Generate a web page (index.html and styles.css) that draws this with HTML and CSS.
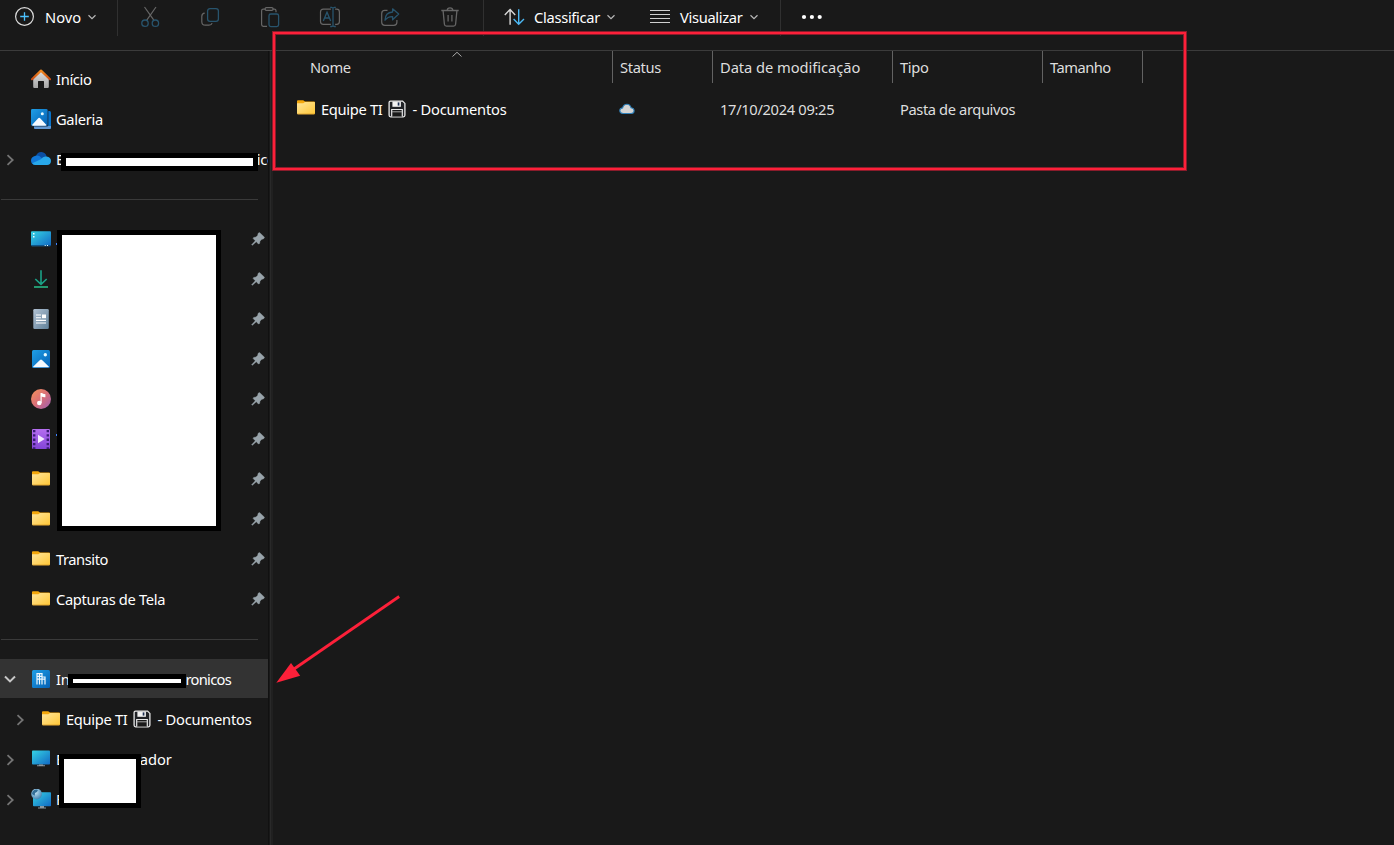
FILE: index.html
```html
<!DOCTYPE html>
<html lang="pt-BR">
<head>
<meta charset="utf-8">
<title>Explorador de Arquivos</title>
<link rel="stylesheet" href="styles.css">
</head>
<body>
<svg class="defs" aria-hidden="true">
  <defs>
    <linearGradient id="gFolder" x1="0" y1="0" x2="1" y2="1"><stop offset="0" stop-color="#ffe69c"/><stop offset="1" stop-color="#ffc736"/></linearGradient>
    <linearGradient id="gBlue" x1="0" y1="0" x2="1" y2="1"><stop offset="0" stop-color="#1f9fe6"/><stop offset="1" stop-color="#0560b4"/></linearGradient>
    <linearGradient id="gCyan" x1="0" y1="0" x2="1" y2="1"><stop offset="0" stop-color="#35d3e4"/><stop offset="1" stop-color="#1269c4"/></linearGradient>
    <linearGradient id="gDoc" x1="0" y1="0" x2="1" y2="1"><stop offset="0" stop-color="#b2c2d3"/><stop offset="1" stop-color="#60819a"/></linearGradient>
    <linearGradient id="gMusic" x1="0" y1="0" x2="1" y2="1"><stop offset="0" stop-color="#f5935a"/><stop offset=".5" stop-color="#d96f78"/><stop offset="1" stop-color="#9c5fb5"/></linearGradient>
    <linearGradient id="gVideo" x1="0" y1="0" x2="0" y2="1"><stop offset="0" stop-color="#b56ef0"/><stop offset="1" stop-color="#8244d8"/></linearGradient>
    <linearGradient id="gHouse" x1="0" y1="0" x2="0" y2="1"><stop offset="0" stop-color="#dedede"/><stop offset="1" stop-color="#a6a6a6"/></linearGradient>
    <linearGradient id="gRoof" x1="0" y1="0" x2="0" y2="1"><stop offset="0" stop-color="#f38a1d"/><stop offset="1" stop-color="#c94b12"/></linearGradient>
    <radialGradient id="gGlobe" cx=".4" cy=".35" r=".7"><stop offset="0" stop-color="#c5e4f5"/><stop offset="1" stop-color="#3c80b0"/></radialGradient>
  </defs>
  <symbol id="folder" viewBox="0 0 20 20">
    <path d="M1 3.1Q1 2.2 2 2.2H7.2L9 3.4H18Q19 3.4 19 4.4V9H1Z" fill="#f5a80b"/>
    <path d="M1 5.2H7.3L9 4H18.2Q19 4 19 4.8V15.3Q19 16.3 18 16.3H2Q1 16.3 1 15.3Z" fill="url(#gFolder)"/>
    <path d="M1.5 16H18.5" stroke="#d99a25" stroke-width=".7"/>
  </symbol>
  <symbol id="pin" viewBox="0 0 14 14">
    <path d="M8.5.5 13.5 5.2 12.7 6.7 10.6 7.5 9 9.2 8.6 11.5 7.4 12 5.3 9.7 1.4 13.3.6 12.7 4.3 8.8 2.1 6.5 2.6 5.5 5 5 6.6 3.4 7.2 1.2Z" fill="#98a3aa" stroke="#98a3aa" stroke-width=".4"/>
  </symbol>
  <symbol id="right" viewBox="0 0 10 12"><path d="M2.5 1.2 7.7 6 2.5 10.8" fill="none" stroke="#747474" stroke-width="1.8"/></symbol>
  <symbol id="down" viewBox="0 0 10 8"><path d="M1.5 2.3 5 5.6 8.5 2.3" fill="none" stroke="#b8b8b8" stroke-width="1.2"/></symbol>
  <symbol id="floppy" viewBox="0 0 18 18">
    <path d="M2.5 1.1H14.6L16.9 3.4V15.3Q16.9 16.8 15.4 16.8H2.6Q1.1 16.8 1.1 15.3V2.6Q1.1 1.1 2.5 1.1Z" fill="#202226" stroke="#e8e8e8" stroke-width="1.3"/>
    <path d="M4.4 1.5H12.9V6.8H4.4Z" fill="#f2f2f2"/><path d="M9.7 2.4H11.4V5.6H9.7Z" fill="#1b2d50"/>
    <path d="M3.7 16.5V9.5H14.3V16.5" fill="#191919" stroke="#e8e8e8" stroke-width="1.2"/><path d="M4 11.8H14" stroke="#b5b5b5" stroke-width=".9"/>
  </symbol>
</svg>

<div class="window">
  <header class="toolbar">
    <div class="command new">
      <svg width="20" height="20" viewBox="0 0 20 20" fill="none"><circle cx="9.5" cy="9.5" r="8.9" stroke="#dcdcdc" stroke-width="1.2"/><path d="M9.5 5.2V13.8M5.2 9.5H13.8" stroke="#4cc2ff" stroke-width="1.3"/></svg>
      <span class="label t-new">Novo</span>
      <svg class="caret" width="10" height="8"><use href="#down"/></svg>
    </div>
    <div class="rule"></div>
    <div class="actions">
      <svg viewBox="0 0 24 24" fill="none"><path d="M6.5 2 16 15.4M18 2 8.6 15.4" stroke="#666" stroke-width="1.2"/><circle cx="7" cy="18.2" r="3.2" stroke="#28546d" stroke-width="1.3"/><circle cx="17.4" cy="18.2" r="3.2" stroke="#28546d" stroke-width="1.3"/></svg>
      <svg viewBox="0 0 24 24" fill="none"><path d="M6.7 8.2Q3.8 8.5 3.8 11.4V16.7Q3.8 20.2 7.3 20.2H11Q13.6 20.2 14.1 18.2" stroke="#666" stroke-width="1.2"/><rect x="9.6" y="3.6" width="10.8" height="12.8" rx="2.4" stroke="#28546d" stroke-width="1.3"/></svg>
      <svg viewBox="0 0 24 24" fill="none"><path d="M8 4.2H5.2Q3.6 4.2 3.6 5.8V19.6Q3.6 21.3 5.2 21.3H9M14.3 4.2H16.3Q18 4.2 18 5.8V7.2" stroke="#666" stroke-width="1.2"/><rect x="7" y="2.6" width="8.2" height="2.8" rx="1.4" stroke="#666" stroke-width="1.1"/><rect x="11" y="9" width="9.6" height="12.6" rx="1.8" stroke="#28546d" stroke-width="1.3"/></svg>
      <svg viewBox="0 0 24 24" fill="none"><path d="M12.9 4.2H5.3Q2.5 4.2 2.5 7V16.5Q2.5 19.3 5.3 19.3H12.9M17.1 4.2H18.7Q21.4 4.2 21.4 7V16.5Q21.4 19.3 18.7 19.3H17.1" stroke="#666" stroke-width="1.2"/><path d="M5.3 16 9 7.2 12.7 16M6.5 13H11.5M12.2 2.3H13.6L15 3 16.4 2.3H17.8M12.2 21.5H13.6L15 20.8 16.4 21.5H17.8M15 3V21" stroke="#28546d" stroke-width="1.3"/></svg>
      <svg viewBox="0 0 24 24" fill="none"><path d="M9.5 5.4H6.8Q3.7 5.4 3.7 8.4V17.3Q3.7 20.3 6.8 20.3H15.8Q18.9 20.3 18.9 17.3V15" stroke="#666" stroke-width="1.2"/><path d="M14.6 3.8 20.7 9.1 14.6 14.7V11.6Q9.8 11.4 7 15.2Q7.2 7.5 14.6 7Z" stroke="#28546d" stroke-width="1.3" stroke-linejoin="round"/></svg>
      <svg viewBox="0 0 24 24" fill="none"><path d="M3.3 5.5H20.7M9.2 5.2Q9.3 2.8 12 2.8T14.8 5.2M5.1 5.8 6.4 19.3Q6.6 21.2 8.5 21.2H15.5Q17.4 21.2 17.6 19.3L18.9 5.8M10.1 10V16.5M13.9 10V16.5" stroke="#666" stroke-width="1.3"/></svg>
    </div>
    <div class="rule"></div>
    <div class="command sort">
      <svg width="22" height="20" viewBox="0 0 22 20" fill="none" stroke-width="1.4"><path d="M6.1 17.7V2.6M.8 8 6.1 2.5 11.2 8" stroke="#d8d8d8"/><path d="M14.7 2.2V17M9.6 12 14.7 17.2 20 12" stroke="#4cb8f4"/></svg>
      <span class="label t-sort">Classificar</span>
      <svg class="caret" width="10" height="8"><use href="#down"/></svg>
    </div>
    <div class="command view">
      <svg width="20" height="16" viewBox="0 0 20 16"><path d="M0 1.5H20M0 5.5H20M0 9.5H20M0 13.5H20" stroke="#d0d0d0" stroke-width="1.2"/></svg>
      <span class="label t-view">Visualizar</span>
      <svg class="caret" width="10" height="8"><use href="#down"/></svg>
    </div>
    <div class="rule"></div>
    <div class="command more"><svg width="22" height="6" viewBox="0 0 22 6" fill="#fff"><circle cx="3" cy="3" r="2.1"/><circle cx="10.9" cy="3" r="2.1"/><circle cx="18.7" cy="3" r="2.1"/></svg></div>
  </header>

  <div class="body">
    <nav class="sidebar">
      <div class="item"><svg class="icon" viewBox="0 0 20 20"><path d="M2.2 9 10 2.2 17.8 9V17.8Q17.8 19 16.7 19H13V12.6Q13 12 12.4 12H7.6Q7 12 7 12.6V19H3.3Q2.2 19 2.2 17.8Z" fill="url(#gHouse)"/><path d="M1 10.2 10 1.6 19 10.2" fill="none" stroke="url(#gRoof)" stroke-width="2.2" stroke-linecap="round" stroke-linejoin="round"/></svg><span class="label t-home">Início</span></div>
      <div class="item"><svg class="icon" viewBox="0 0 20 20"><path d="M4 2H18.5Q20 2 20 3.5V18.5Q20 20 18.5 20H4.5Q3 20 3 18.5Z" fill="#0872c8"/><path d="M3 17H20V18.5Q20 20 18.5 20H4.5Q3 20 3 18.5Z" fill="#6398d2"/><rect width="17.4" height="17.6" rx="1.7" fill="#16314d"/><rect width="16.5" height="16.7" rx="1.4" fill="url(#gBlue)"/><path d="M1 16 7 9.5Q8.2 8.2 9.4 9.5L15.5 16Q15.3 16.7 14.5 16.7H2Q1.2 16.7 1 16Z" fill="#f4f9ff"/><circle cx="11.3" cy="4.8" r="1.5" fill="#e8fbff"/></svg><span class="label t-gallery">Galeria</span></div>
      <div class="item"><svg class="chevron"><use href="#right"/></svg><svg class="icon" viewBox="0 0 20 20"><path d="M5 7Q6.4 2.8 10.6 3Q14.4 3.3 15.7 7.4L12 11 4 9Z" fill="#0b4fa3"/><path d="M4.6 6.8Q7.8 5.9 10.2 8.5L13.8 12.5 4 16Q0 15.5 0 11.6 0 7.7 4.6 6.8Z" fill="#1177d7"/><path d="M9.8 10.2Q12.5 6.7 15.5 7.6 20 8.3 20 12 19.8 15.9 16 16H4.4Q2.1 15.8 1.3 14.2Z" fill="#28a8ea"/></svg><span class="label">E</span><span class="label tail">ico</span><i class="redact account"></i></div>
      <div class="divider"></div>

      <div class="item"><svg class="icon" viewBox="0 0 20 20"><rect y="2.2" width="20" height="15" rx="1" fill="url(#gCyan)"/><path d="M0 16.2H20V17H0Z" fill="#0c4778"/><path d="M2 4h1.5v1.5H2zM2 7h1.5v1.5H2zM13.7 16h1v1h-1zM16 16h1v1h-1z" fill="#e8ffff"/></svg><i class="peek low"></i><svg class="pin"><use href="#pin"/></svg></div>
      <div class="item"><svg class="icon" viewBox="0 0 20 20" fill="none" stroke="#23976f" stroke-width="1.6"><path d="M10 1.3V15M4.3 10 10 15.4 15.7 10" stroke="#1ba287"/><path d="M3 18H17" stroke-width="2"/></svg><svg class="pin"><use href="#pin"/></svg></div>
      <div class="item"><svg class="icon" viewBox="0 0 20 20"><rect x="2.3" width="15.5" height="20" rx="1.3" fill="url(#gDoc)"/><path d="M5 6H10M5 8.7H10M5 11.4H15M5 14H15" stroke="#fff" stroke-width="1.1"/><path d="M11 5.5H15V9.2H11Z" fill="#fff"/></svg><svg class="pin"><use href="#pin"/></svg></div>
      <div class="item"><svg class="icon" viewBox="0 0 20 20"><rect x="1" y="1" width="18" height="18" rx="1.5" fill="url(#gBlue)"/><path d="M2 17.8 9 11Q10 10 11 11L18 17.8Q17.7 18.3 17 18.3H3Q2.3 18.3 2 17.8Z" fill="#f4f9ff"/><circle cx="14.3" cy="5.7" r="1.7" fill="#e8fbff"/></svg><svg class="pin"><use href="#pin"/></svg></div>
      <div class="item"><svg class="icon" viewBox="0 0 20 20"><circle cx="10" cy="10" r="10" fill="url(#gMusic)"/><circle cx="8.3" cy="14" r="2.3" fill="#fff"/><path d="M9.5 4H11Q11.5 5 14.4 5.2V8.2Q12 8.4 10.7 7.5V14H9.5Z" fill="#fff"/></svg><svg class="pin"><use href="#pin"/></svg></div>
      <div class="item"><svg class="icon" viewBox="0 0 20 20"><rect x="1" width="18" height="20" rx="1.3" fill="url(#gVideo)"/><path d="M3.2 1V20M16.8 1V20" stroke="#3b1b77" stroke-width="2.4" stroke-dasharray="2.3 2"/><path d="M7 5.8 13.7 10 7 14.2Z" fill="#f4eaff"/></svg><i class="peek high"></i><svg class="pin"><use href="#pin"/></svg></div>
      <div class="item"><svg class="icon"><use href="#folder"/></svg><svg class="pin"><use href="#pin"/></svg></div>
      <div class="item"><svg class="icon"><use href="#folder"/></svg><svg class="pin"><use href="#pin"/></svg></div>
      <div class="item"><svg class="icon"><use href="#folder"/></svg><span class="label t-transito">Transito</span><svg class="pin"><use href="#pin"/></svg></div>
      <div class="item"><svg class="icon"><use href="#folder"/></svg><span class="label t-capturas">Capturas de Tela</span><svg class="pin"><use href="#pin"/></svg></div>
      <div class="divider"></div>

      <div class="item selected"><svg class="chevron open" viewBox="0 0 12 10"><path d="M1 2.5 6 7.4 11 2.5" fill="none" stroke="#c8c8c8" stroke-width="2"/></svg><svg class="icon" viewBox="0 0 20 20"><rect x="1" y="1" width="18" height="18" rx="1.5" fill="url(#gBlue)"/><path d="M6 15.5V4.6H11V8H14V15.5M8.5 4.6V15.5M11 8V15.5M6 7.4H11M6 10.2H14" fill="none" stroke="#eef8ff" stroke-width="1.2"/></svg><span class="label">In</span><span class="label tail org">ronicos</span><i class="redact tenant"></i></div>
      <div class="item child"><svg class="chevron"><use href="#right"/></svg><svg class="icon"><use href="#folder"/></svg><span class="label t-team">Equipe TI</span><svg class="floppy"><use href="#floppy"/></svg><span class="label t-docs">- Documentos</span></div>
      <div class="item"><svg class="chevron"><use href="#right"/></svg><svg class="icon" viewBox="0 0 20 20"><rect x="1" y="1.5" width="18" height="14" rx=".8" fill="url(#gCyan)"/><path d="M8 15.5H12V16.2H14V17.2H6V16.2H8Z" fill="#8c979f"/></svg><span class="label">E</span><span class="label tail pc">ador</span></div>
      <div class="item"><svg class="chevron"><use href="#right"/></svg><svg class="icon" viewBox="0 0 20 20"><rect x="2" y="3.2" width="18" height="14" rx=".8" fill="url(#gCyan)"/><path d="M9 17H13V18.4H15V19.5H7V18.4H9Z" fill="#8c979f"/><circle cx="5.6" cy="5" r="5.4" fill="url(#gGlobe)"/><path d="M1.5 2.7Q4-.5 7 1 6.3 3.4 4 4L3.7 6.8 1 5Z" fill="#326d96"/></svg><span class="label">F</span></div>
      <i class="redact quick"></i>
      <i class="redact devices"></i>
    </nav>
    <div class="splitter"></div>
    <main class="files">
      <svg class="ascending" viewBox="0 0 12 7"><path d="M1.5 5.5 6 1.3 10.5 5.5" fill="none" stroke="#aaa"/></svg>
      <div class="columns head">
        <div class="name"><span class="label t-name">Nome</span></div>
        <div><span class="label t-status">Status</span></div>
        <div><span class="label t-date">Data de modificação</span></div>
        <div><span class="label t-type">Tipo</span></div>
        <div><span class="label t-size">Tamanho</span></div>
      </div>
      <div class="columns entry">
        <div class="name"><svg class="icon"><use href="#folder"/></svg><span class="label t-team">Equipe TI</span><svg class="floppy"><use href="#floppy"/></svg><span class="label t-docs">- Documentos</span></div>
        <div><svg class="cloud" viewBox="0 0 16 12"><path d="M4 10.5Q.8 10.3.8 7.6.8 5.3 3.6 4.9 4.6 1.2 8 1.2 11.1 1.2 12 4.7 15.1 5.1 15.1 7.7 15.1 10.3 12.2 10.5Z" fill="#d4d4d4" stroke="#2f80b9" stroke-width="1.1"/></svg></div>
        <div><span class="label t-stamp">17/10/2024 09:25</span></div>
        <div><span class="label t-kind">Pasta de arquivos</span></div>
        <div></div>
      </div>
    </main>
  </div>

  <div class="highlight"></div>
  <svg class="arrow" viewBox="0 0 130 94"><path d="M123.2 2.5 18 75" stroke="#fd2039" stroke-width="2.8"/><path d="M.3 88.8 15 69 24.2 81.8Z" fill="#fd2039"/></svg>
</div>
</body>
</html>
```
FILE: styles.css
```css
* { box-sizing: border-box; }
body {
  margin: 0;
  background: #191919;
  color: #fff;
  font: 14.7px/20px "Noto Sans", "Open Sans", sans-serif;
  letter-spacing: -0.33px;
}
svg { display: block; flex: none; }
.defs { position: absolute; width: 0; height: 0; }
.window { position: relative; width: 1394px; height: 845px; overflow: hidden; }
.label { white-space: nowrap; flex: none; }

.toolbar { display: flex; align-items: flex-start; height: 51px; border-bottom: 1px solid #3b3b3b; }
.rule { width: 1px; height: 36px; background: #303030; }
.command { display: flex; align-items: center; height: 34px; }
.command .caret { margin-left: auto; }
.new { width: 117px; padding: 0 20px 0 15px; }
.new .label { margin-left: 10px; }
.new > svg:first-child { margin-top: -1px; }
.actions { display: flex; width: 365px; padding-left: 2px; }
.actions svg { width: 60px; height: 24px; margin-top: 5px; }
.sort { width: 147px; padding: 0 15px 0 20px; }
.sort .label { margin-left: 8px; }
.view { width: 149px; padding: 0 21px 0 19px; }
.view .label { margin-left: 10px; }
.more { padding-left: 20px; }

.body { display: flex; height: 794px; }
.sidebar { position: relative; width: 268px; padding-top: 8px; flex: none; overflow: hidden; }
.item { position: relative; display: flex; align-items: center; height: 40px; padding-left: 31px; padding-right: 3px; }
.item .icon { width: 20px; height: 20px; margin-right: 5px; }
.child { padding-left: 41px; }
.chevron { width: 10px; height: 12px; margin-left: -26px; margin-right: 16px; margin-top: 1px; }
.chevron.open { width: 12px; height: 10px; margin-left: -27px; margin-right: 15px; }
.pin { width: 14px; height: 14px; margin-left: auto; }
.floppy { width: 18px; height: 18px; margin: 0 6px; }
.selected { height: 39px; margin-bottom: 1px; background: #333; }
.divider { height: 40px; padding-top: 20px; }
.divider::before { content: ""; display: block; width: 257px; height: 1px; margin-left: 1px; background: #3a3a3a; }
.peek { width: 2px; height: 2px; background: #3f83ff; }
.peek.low { margin-top: 10px; }
.peek.high { margin-top: -9px; }
.tail { margin-left: 193px; }
.org { margin-left: 116px; letter-spacing: -0.7px; }
.pc { margin-left: 76px; letter-spacing: -0.1px; }

.t-sort { letter-spacing: -0.3px; }
.t-new { letter-spacing: 0; }
.t-transito { letter-spacing: -0.45px; }
.t-date { letter-spacing: -0.05px; }
.t-size { letter-spacing: -0.5px; }
.t-kind { letter-spacing: -0.4px; }
.t-docs { letter-spacing: -0.2px; }

.redact { position: absolute; background: #fff; border: 5px solid #000; }
.account { left: 61px; top: 14px; width: 197px; height: 18px; }
.tenant { left: 68px; top: 15px; width: 118px; height: 14px; }
.quick { left: 57px; top: 179px; width: 164px; height: 301px; }
.devices { left: 59px; top: 703px; width: 82px; height: 54px; }

.splitter { width: 5px; background: linear-gradient(90deg, #111 0 1px, #191919 1px 2px, #292929 2px 3px, #202020 3px 5px); flex: none; }
.files { position: relative; flex: 1; }
.columns { display: grid; grid-template-columns: 340px 100px 180px 150px 100px; }
.columns > div { display: flex; align-items: center; padding-left: 7px; color: #dedede; }
.head { height: 33px; }
.head > div { border-right: 1px solid #626262; height: 32px; }
.head .name { padding-left: 37px; }
.entry { height: 40px; margin-top: 5px; }
.entry .name { padding-left: 23px; color: #fff; }
.entry .icon { width: 20px; height: 20px; margin-right: 5px; margin-top: -3px; }
.cloud { width: 16px; height: 12px; margin-left: -1px; }
.ascending { position: absolute; left: 178px; top: 0; width: 12px; height: 7px; }

.highlight { position: absolute; left: 273px; top: 32px; width: 913px; height: 138px; border: 2px solid #fd2039; box-shadow: 0 0 0 1px #8a1c2b, inset 0 0 0 1px #8a1c2b; }
.arrow { position: absolute; left: 276px; top: 594px; width: 130px; height: 94px; }
```
